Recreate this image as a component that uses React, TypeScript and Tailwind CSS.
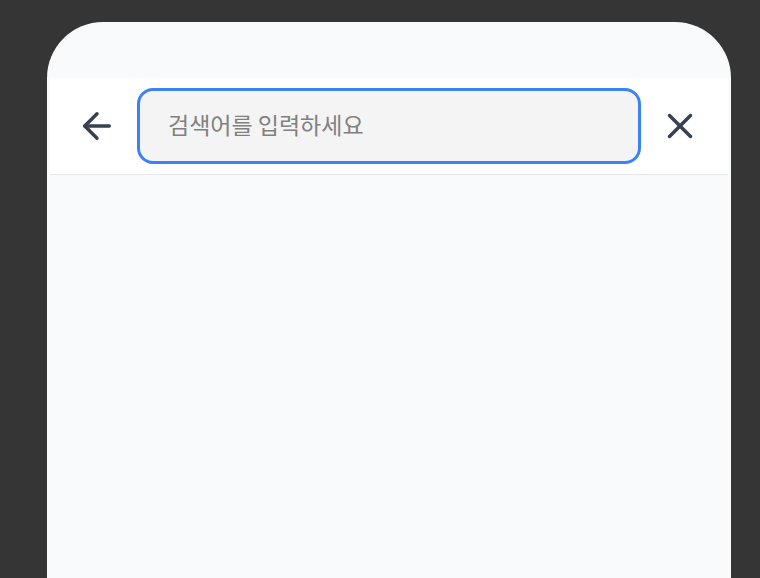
import React from "react";
import { ArrowLeft, X } from "lucide-react";

export default function App() {
  return (
    <div className="w-[760px] h-[578px] bg-[#353535] overflow-hidden pt-[22px] pl-[47px]">
      <div
        className="w-[684px] h-[600px] bg-[#f9fafb] rounded-t-[56px] px-[3px] flex flex-col"
        style={{ fontFamily: '"Noto Sans CJK KR", "Noto Sans", sans-serif' }}
      >
        <div className="h-[56px] shrink-0" />
        <div className="h-[97px] shrink-0 bg-white border-b border-[#e5e7eb] flex items-center pl-[23px] pr-[24px] gap-[15px]">
          <button className="w-[48px] h-[48px] flex items-center justify-center text-[#374151]">
            <ArrowLeft size={42} strokeWidth={2} />
          </button>
          <div className="flex-1 h-[76px] rounded-[16px] border-[3px] border-[#3b82f6] bg-[#f4f4f4] flex items-center pl-[28px] ml-[1px]">
            <span className="text-[23px] text-[#808080] leading-[1.2] -mt-[2px]">검색어를 입력하세요</span>
          </div>
          <button className="w-[48px] h-[48px] flex items-center justify-center text-[#374151]">
            <X size={42} strokeWidth={2} />
          </button>
        </div>
        <div className="flex-1" />
      </div>
    </div>
  );
}
